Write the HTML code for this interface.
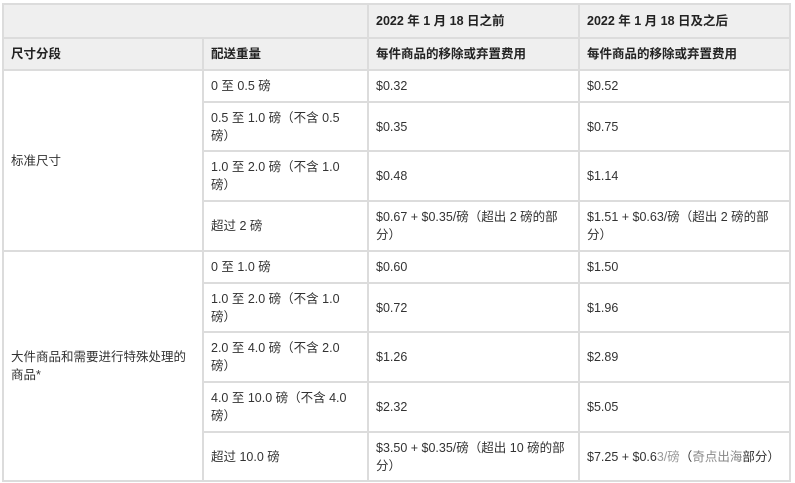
<!DOCTYPE html>
<html><head><meta charset="utf-8"><style>
body{margin:0;background:#fff;width:795px;height:483px;overflow:hidden}
table{position:absolute;left:2px;top:3px;border-collapse:collapse;table-layout:fixed;font-family:"Liberation Sans","Noto Sans CJK SC",sans-serif;font-size:12.5px;color:#333;line-height:18px}
td{border:2px solid #dcdcdc;padding:0 7px;vertical-align:middle;overflow:hidden}
.h{background:#efefef;font-weight:bold;color:#222}
</style></head><body>
<table>
<colgroup><col style="width:200px"><col style="width:165px"><col style="width:211px"><col style="width:211px"></colgroup>
<tr style="height:34px"><td class="h" colspan="2"></td><td class="h">2022 年 1 月 18 日之前</td><td class="h">2022 年 1 月 18 日及之后</td></tr>
<tr style="height:32px"><td class="h">尺寸分段</td><td class="h">配送重量</td><td class="h">每件商品的移除或弃置费用</td><td class="h">每件商品的移除或弃置费用</td></tr>
<tr style="height:32px"><td rowspan="4">标准尺寸</td><td>0 至 0.5 磅</td><td>$0.32</td><td>$0.52</td></tr>
<tr style="height:49px"><td>0.5 至 1.0 磅（不含 0.5 磅）</td><td>$0.35</td><td>$0.75</td></tr>
<tr style="height:50px"><td>1.0 至 2.0 磅（不含 1.0 磅）</td><td>$0.48</td><td>$1.14</td></tr>
<tr style="height:50px"><td>超过 2 磅</td><td>$0.67 + $0.35/磅（超出 2 磅的部分）</td><td>$1.51 + $0.63/磅（超出 2 磅的部分）</td></tr>
<tr style="height:32px"><td rowspan="5">大件商品和需要进行特殊处理的商品*</td><td>0 至 1.0 磅</td><td>$0.60</td><td>$1.50</td></tr>
<tr style="height:49px"><td>1.0 至 2.0 磅（不含 1.0 磅）</td><td>$0.72</td><td>$1.96</td></tr>
<tr style="height:50px"><td>2.0 至 4.0 磅（不含 2.0 磅）</td><td>$1.26</td><td>$2.89</td></tr>
<tr style="height:50px"><td>4.0 至 10.0 磅（不含 4.0 磅）</td><td>$2.32</td><td>$5.05</td></tr>
<tr style="height:49px"><td>超过 10.0 磅</td><td>$3.50 + $0.35/磅（超出 10 磅的部分）</td><td>$7.25 + $0.6<span style="color:#999">3/磅</span>（<span style="color:#888">奇点出海</span>部分）</td></tr>
</table>
</body></html>
